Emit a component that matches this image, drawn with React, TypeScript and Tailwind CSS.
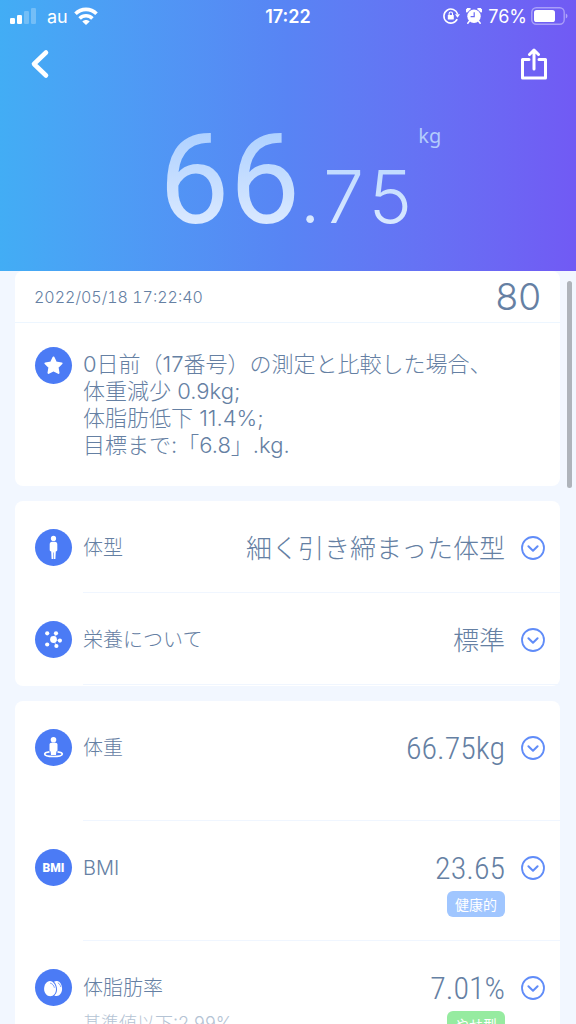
import type { ReactNode } from "react";

type Row = {
  label: string;
  value: string;
  icon: ReactNode;
  note?: string;
  tag?: string;
  tagColor?: string;
};

const PersonIcon = () => (
  <svg viewBox="0 0 37 37" className="size-full" fill="white">
    <circle cx="18.5" cy="9.4" r="2.6" />
    <path d="M17.2 12.8h2.6c1.7 0 2.5 1 2.5 2.4v5.6c0 1-.6 1.5-1.5 1.8L20.4 30h-3.8l-.4-7.4c-.9-.3-1.5-.8-1.5-1.8v-5.6c0-1.4.8-2.4 2.5-2.4z" />
    <path d="M18.5 23.5V30" stroke="#4b7bf5" strokeWidth="0.6" />
  </svg>
);

const NutritionIcon = () => (
  <svg viewBox="0 0 37 37" className="size-full" fill="white">
    <path d="M18.5 18.5 21 12.5M18.5 18.5l6.2 1.2M18.5 18.5 21.3 25" stroke="white" strokeWidth="0.6" />
    <circle cx="18.5" cy="18.5" r="3.4" />
    <circle cx="12.2" cy="12.3" r="2.1" />
    <circle cx="21" cy="12.3" r="2.1" />
    <circle cx="24.9" cy="19.6" r="2.1" />
    <circle cx="12.2" cy="23.5" r="2.1" />
    <circle cx="21.4" cy="25" r="2.1" />
  </svg>
);

const WeightIcon = () => (
  <svg viewBox="0 0 37 37" className="size-full" fill="white">
    <circle cx="18.5" cy="10.8" r="2.8" />
    <path d="M16.5 13.7h4c1.3 0 2 .8 2 1.9v5.6c0 .7-.4 1.1-1.1 1.2L21 26h-5l-.4-3.6c-.7-.1-1.1-.5-1.1-1.2v-5.6c0-1.1.7-1.9 2-1.9z" />
    <path d="M14.5 22.8c-3 .3-4.8 1.1-4.8 2.2 0 1.6 3.7 2.5 8.8 2.5s8.8-.9 8.8-2.5c0-1.1-1.8-1.9-4.8-2.2" fill="none" stroke="white" strokeWidth="1.7" />
  </svg>
);

const BmiIcon = () => (
  <span className="font-[Roboto,sans-serif] text-[12px] leading-none font-black text-white">
    BMI
  </span>
);

const FatIcon = () => (
  <svg viewBox="0 0 37 37" className="size-full" fill="white">
    <path d="M16 12c3.5 0 6 4.5 6 8.5 0 3.6-2.4 6.7-5.7 6.7-3.6 0-6.2-3.2-6.2-7.2 0-4.2 2.4-8 5.9-8z" transform="translate(-1 0)" />
    <path d="M20 12.8c1-.7 2-.9 3-.8 3.1.3 5.1 4 5.1 7.8 0 4-2.3 7.2-5.5 7.2-.8 0-1.6-.2-2.3-.6 1.7-1.5 2.7-3.4 2.7-6 0-2.9-1.2-5.7-3-7.6z" transform="translate(-1 0)" />
    <path d="M15.5 14.2c2 .5 3.3 2.200 3.800 4.200M23.200 14c1.300.6 2.100 2 2.400 3.600" fill="none" stroke="#4b7bf5" strokeWidth="0.7" strokeLinecap="round" strokeDasharray="2.5 1" />
  </svg>
);

const bodyRows: Row[] = [
  { label: "体型", value: "細く引き締まった体型", icon: <PersonIcon /> },
  { label: "栄養について", value: "標準", icon: <NutritionIcon /> },
];

const measureRows: Row[] = [
  { label: "体重", value: "66.75kg", icon: <WeightIcon /> },
  { label: "BMI", value: "23.65", icon: <BmiIcon />, tag: "健康的", tagColor: "bg-[#a0c6ff]" },
  {
    label: "体脂肪率",
    value: "7.01%",
    icon: <FatIcon />,
    note: "基準値以下:2.99%",
    tag: "やせ型",
    tagColor: "bg-[#96eba0]",
  },
];

function Badge({ children }: { children: ReactNode }) {
  return (
    <span className="flex size-[37px] shrink-0 items-center justify-center rounded-full bg-[#4b7bf5]">
      {children}
    </span>
  );
}

function ExpandButton({ label }: { label: string }) {
  return (
    <button type="button" aria-label={label} className="ml-4 size-6 shrink-0">
      <svg viewBox="0 0 24 24" className="size-6" fill="none" stroke="#608cf8" strokeWidth="1.8">
        <circle cx="12" cy="12" r="11" />
        <path d="m7.4 10.2 4.6 4.6 4.6-4.6" strokeWidth="2" strokeLinecap="round" strokeLinejoin="round" />
      </svg>
    </button>
  );
}

function StatusBar() {
  return (
    <div className="grid h-8 grid-cols-3 items-center px-2 text-white">
      <div className="flex items-center gap-[11px] pl-0.5">
        <svg viewBox="0 0 26 16" className="h-4 w-[26px]" fill="white">
          <rect x="0" y="10" width="5" height="6" rx="1.3" />
          <rect x="7" y="7" width="5" height="9" rx="1.3" />
          <rect x="14" y="3" width="5" height="13" rx="1.3" opacity="0.25" />
          <rect x="21" y="0" width="5" height="16" rx="1.3" opacity="0.25" />
        </svg>
        <div className="flex items-center gap-1.5">
          <span className="text-[18px] font-normal">au</span>
          <svg viewBox="0 0 24 18" className="h-[18px] w-6" fill="none" stroke="white" strokeWidth="3.6">
            <path d="M1.5 6.7C7.2.9 16.8.9 22.5 6.7" />
            <path d="M5.6 11.4c3.6-3.6 9.2-3.6 12.8 0" />
            <path d="M12 18 8.3 14.4c2.1-2 5.3-2 7.4 0z" fill="white" stroke="none" />
          </svg>
        </div>
      </div>
      <span className="text-center text-[18px] font-semibold">17:22</span>
      <div className="flex items-center justify-end">
        <svg viewBox="0 0 18 18" className="mr-1.5 size-[18px]" fill="none" stroke="white" strokeWidth="1.6">
          <path d="M15.2 12.2A7 7 0 1 1 15.6 7" />
          <path d="M13 7.2h5l-2.5 3.6z" fill="white" stroke="none" />
          <rect x="5.8" y="8" width="6" height="4.6" rx="0.6" fill="white" stroke="none" />
          <path d="M7.1 8V6.7a1.7 1.7 0 0 1 3.4 0V8" strokeWidth="1.1" />
        </svg>
        <svg viewBox="0 0 16 16" className="mr-1.5 size-4" fill="white">
          <circle cx="8" cy="8.3" r="6.7" />
          <path d="M.8 4.3A2.5 2.5 0 0 1 4.5.9zM15.2 4.3A2.5 2.5 0 0 0 11.5.9z" stroke="white" />
          <path d="m3.5 13-1.7 2.2M12.5 13l1.7 2.2" stroke="white" strokeWidth="1.5" strokeLinecap="round" />
          <path d="M8.2 4.3v4.3H4.6" fill="none" stroke="#6a69f4" strokeWidth="1.2" />
        </svg>
        <span className="mr-1 text-[18px] font-normal">76%</span>
        <svg viewBox="0 0 37 18" className="h-[18px] w-[37px]">
          <rect x="0.8" y="0.8" width="32.4" height="16.4" rx="4.5" fill="none" stroke="white" strokeOpacity="0.4" strokeWidth="1.4" />
          <rect x="3" y="3" width="21" height="12" rx="2.6" fill="white" />
          <path d="M34.8 6.5c2.2.7 2.2 4.3 0 5z" fill="white" opacity="0.45" />
        </svg>
      </div>
    </div>
  );
}

function MetricRow({ row, tall }: { row: Row; tall?: boolean }) {
  return (
    <li className={`flex items-start pl-5 ${tall ? "h-[120px]" : "h-[92px]"}`}>
      <div className="pt-7">
        <Badge>{row.icon}</Badge>
      </div>
      <div className="ml-[11px] flex h-full flex-1 items-start border-b border-[#f0f6ff] pt-7 pr-[15px]">
        <div className="flex-1">
          <p className="text-[20px] leading-[39px]">{row.label}</p>
          {row.note && <p className="mt-1 text-[18px] leading-6 text-[#b4c3d4]">{row.note}</p>}
        </div>
        <div className="flex flex-col items-end">
          <p
            className={
              tall
                ? "font-['Roboto_Condensed',Roboto,sans-serif] text-[32px] leading-[39px] font-[350]"
                : "text-[26px] leading-[39px]"
            }
          >
            {row.value}
          </p>
          {row.tag && (
            <span
              className={`mt-[3px] flex h-[26px] items-center justify-center rounded-md px-2 text-[14px] font-normal text-white ${row.tagColor}`}
            >
              {row.tag}
            </span>
          )}
        </div>
        <div className="flex h-[37px] items-center">
          <ExpandButton label={`${row.label}の詳細`} />
        </div>
      </div>
    </li>
  );
}

export default function App() {
  return (
    <div className="flex h-screen flex-col overflow-hidden bg-[#f2f7ff] font-[Inter,'Noto_Sans_CJK_JP',sans-serif] font-light text-[#6580a3]">
      <header className="h-[271px] shrink-0 bg-linear-to-r from-[#42adf5] via-[#5884f4] to-[#715af4]">
        <StatusBar />
        <div className="flex h-16 items-center justify-between px-7">
          <button type="button" aria-label="戻る">
            <svg viewBox="0 0 24 30" className="h-[30px] w-6" fill="none" stroke="white" strokeWidth="4.6" strokeLinecap="round" strokeLinejoin="round">
              <path d="M18 3.5 6 15 18 26.5" />
            </svg>
          </button>
          <button type="button" aria-label="共有">
            <svg viewBox="0 0 28 32" className="h-8 w-7" fill="none" stroke="white" strokeWidth="3" strokeLinecap="round" strokeLinejoin="round">
              <path d="M9 11.5H2.5v18.5h23V11.5H19" />
              <path d="M14 21V2.5M9.5 6.5 14 2l4.5 4.5" />
            </svg>
          </button>
        </div>
        <div className="flex justify-center gap-1 pt-6">
          <h1 className="flex items-baseline bg-linear-to-b from-[#a9ceff] to-[#e9f1ff] bg-clip-text leading-[120px] font-normal text-transparent">
            <span className="font-[Roboto,sans-serif] text-[126px]">66</span>
            <span className="text-[73px] font-[350] tabular-nums">.75</span>
          </h1>
          <span className="-mr-6 font-['Noto_Sans',sans-serif] text-[20px] leading-8 font-normal text-[#b3ccfc]">kg</span>
        </div>
      </header>

      <main className="relative flex min-h-0 flex-1 flex-col gap-[15px] overflow-hidden pr-4 pl-[15px]">
        <section className="shrink-0 rounded-lg bg-white">
          <div className="flex h-[52px] items-center justify-between border-b border-[#edf6ff] px-[19px]">
            <time className="text-[16px] tabular-nums">2022/05/18 17:22:40</time>
            <span className="text-[37px] leading-none font-[350]">80</span>
          </div>
          <div className="flex gap-[11px] px-5 py-6">
            <Badge>
              <svg viewBox="0 0 37 37" className="size-full" fill="white" stroke="white" strokeWidth="2" strokeLinejoin="round">
                <path d="m18.5 10.5 2.5 5.1 5.6.8-4 3.9.9 5.6-5-2.6-5 2.6.9-5.6-4-3.9 5.6-.8z" />
              </svg>
            </Badge>
            <p className="pt-1 pb-[3px] text-[22px] leading-[27px]">
              0日前（17番号）の測定と比較した場合、
              <br />
              体重減少 0.9kg;
              <br />
              体脂肪低下 11.4%;
              <br />
              目標まで:「6.8」.kg.
            </p>
          </div>
        </section>

        <ul className="shrink-0 rounded-lg bg-white pb-px">
          {bodyRows.map((row) => (
            <MetricRow key={row.label} row={row} />
          ))}
        </ul>

        <ul className="shrink-0 rounded-lg bg-white">
          {measureRows.map((row) => (
            <MetricRow key={row.label} row={row} tall />
          ))}
        </ul>

        <div className="absolute top-2.5 right-1 h-[207px] w-[5px] rounded-full bg-[#afb4bb]" />
      </main>
    </div>
  );
}
